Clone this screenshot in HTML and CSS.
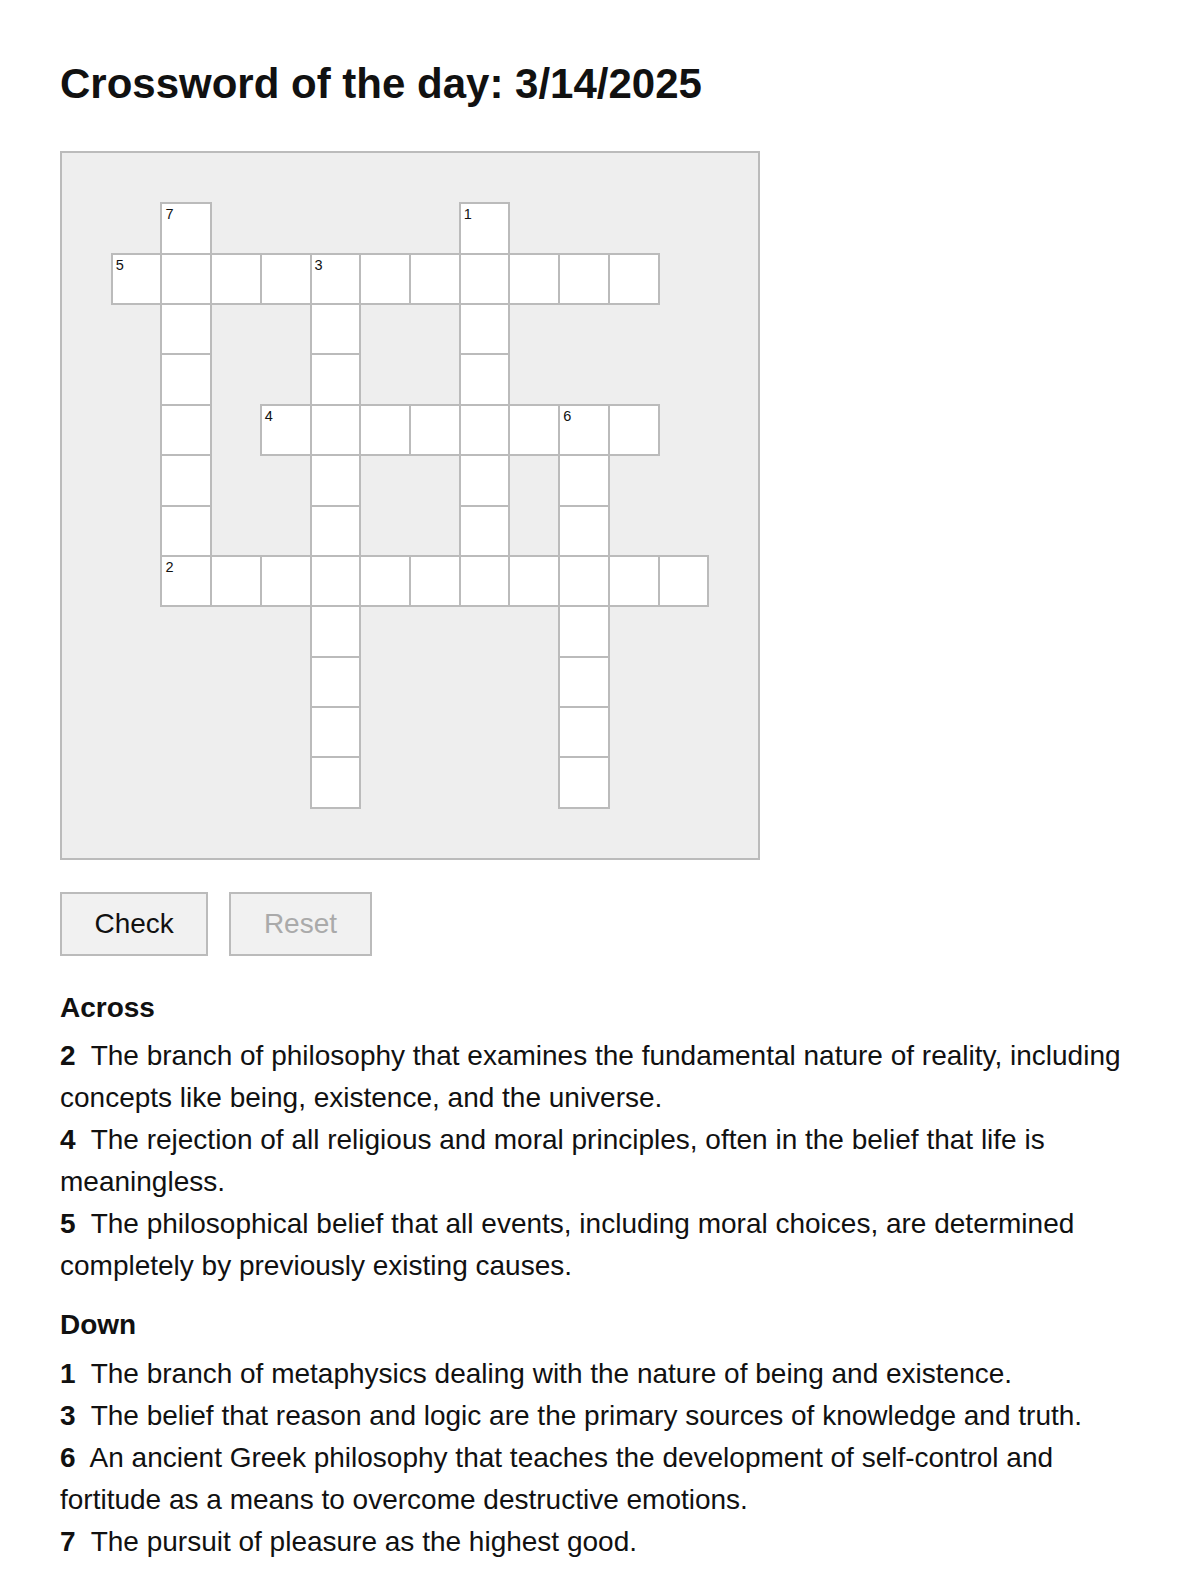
FILE: index.html
```html
<!DOCTYPE html>
<html lang="en">
<head>
  <meta charset="UTF-8">
  <title>Crossword of the day</title>
  <meta name="viewport" content="width=device-width, initial-scale=1">
  <link rel="stylesheet" href="styles.css">
</head>
<body>
  <h1>Crossword of the day: 3/14/2025</h1>
  <div class="board" id="board"></div>
  <div class="actions">
    <button onclick="checkAnswers()">Check</button>
    <button id="reset" onclick="resetBoard()" disabled>Reset</button>
  </div>

  <h2>Across</h2>
  <div class="clue"><b>2</b>&nbsp; The branch of philosophy that examines the fundamental nature of reality, including concepts like being, existence, and the universe.</div>
  <div class="clue"><b>4</b>&nbsp; The rejection of all religious and moral principles, often in the belief that life is meaningless.</div>
  <div class="clue"><b>5</b>&nbsp; The philosophical belief that all events, including moral choices, are determined completely by previously existing causes.</div>

  <h2 class="down">Down</h2>
  <div class="clue"><b>1</b>&nbsp; The branch of metaphysics dealing with the nature of being and existence.</div>
  <div class="clue"><b>3</b>&nbsp; The belief that reason and logic are the primary sources of knowledge and truth.</div>
  <div class="clue"><b>6</b>&nbsp; An ancient Greek philosophy that teaches the development of self-control and fortitude as a means to overcome destructive emotions.</div>
  <div class="clue"><b>7</b>&nbsp; The pursuit of pleasure as the highest good.</div>

  <script>
    const words = [
      { n: 1, row: 1, col: 8, dir: 'down', answer: 'ONTOLOGY' },
      { n: 2, row: 8, col: 2, dir: 'across', answer: 'METAPHYSICS' },
      { n: 3, row: 2, col: 5, dir: 'down', answer: 'RATIONALISM' },
      { n: 4, row: 5, col: 4, dir: 'across', answer: 'NIHILISM' },
      { n: 5, row: 2, col: 1, dir: 'across', answer: 'DETERMINISM' },
      { n: 6, row: 5, col: 10, dir: 'down', answer: 'STOICISM' },
      { n: 7, row: 1, col: 2, dir: 'down', answer: 'HEDONISM' }
    ];
    const board = document.getElementById('board');
    const cells = {};

    words.forEach(w => {
      for (let i = 0; i < w.answer.length; i++) {
        const r = w.dir === 'down' ? w.row + i : w.row;
        const c = w.dir === 'across' ? w.col + i : w.col;
        const key = r + '-' + c;
        if (!cells[key]) {
          const cell = document.createElement('div');
          cell.className = 'cell';
          cell.style.gridRow = r + 1;
          cell.style.gridColumn = c + 1;
          const input = document.createElement('input');
          input.maxLength = 1;
          input.addEventListener('input', () => {
            document.getElementById('reset').disabled = false;
          });
          cell.appendChild(input);
          cell.dataset.letter = w.answer[i];
          board.appendChild(cell);
          cells[key] = cell;
        }
        if (i === 0) {
          const num = document.createElement('span');
          num.className = 'num';
          num.textContent = w.n;
          cells[key].appendChild(num);
        }
      }
    });

    function checkAnswers() {
      Object.values(cells).forEach(cell => {
        const val = cell.querySelector('input').value.toUpperCase();
        cell.classList.toggle('wrong', val !== '' && val !== cell.dataset.letter);
      });
    }

    function resetBoard() {
      Object.values(cells).forEach(cell => {
        cell.querySelector('input').value = '';
        cell.classList.remove('wrong');
      });
      document.getElementById('reset').disabled = true;
    }
  </script>
</body>
</html>
```

FILE: styles.css
```css
body {
  font-family: 'Liberation Sans', Arial, sans-serif;
  margin: 0;
  padding: 60px 60px 20px;
  color: #111;
}
h1 {
  font-size: 42px;
  line-height: 48px;
  margin: 0 0 43px;
}
.board {
  display: grid;
  grid-template-columns: repeat(14, 1fr);
  grid-template-rows: repeat(14, 1fr);
  box-sizing: border-box;
  width: 700px;
  height: 709px;
  background: #eee;
  border: 2px solid #bbb;
}
.cell {
  position: relative;
  background: #fff;
  box-shadow: 0 0 0 1px #bbb, inset 0 0 0 1px #bbb;
}
.cell input {
  width: 100%;
  height: 100%;
  box-sizing: border-box;
  border: none;
  background: transparent;
  text-align: center;
  font-family: inherit;
  font-size: 26px;
  text-transform: uppercase;
  outline: none;
}
.cell.wrong {
  background: #fde2e2;
}
.num {
  position: absolute;
  top: 3px;
  left: 4px;
  font-size: 14.5px;
  line-height: 16px;
  pointer-events: none;
}
.actions {
  display: flex;
  gap: 21px;
  margin-top: 32px;
}
button {
  font-family: inherit;
  font-size: 28px;
  line-height: 32px;
  padding: 14px 32.5px;
  background: #f1f1f1;
  color: #111;
  border: 2px solid #bbb;
  cursor: pointer;
}
button:disabled {
  color: #aaa;
  cursor: default;
}
h2 {
  font-size: 28px;
  line-height: 42px;
  margin: 31px 0 6px;
}
h2.down {
  margin-top: 16px;
  margin-bottom: 7px;
}
.clue {
  font-size: 28px;
  line-height: 42.1px;
}
```
